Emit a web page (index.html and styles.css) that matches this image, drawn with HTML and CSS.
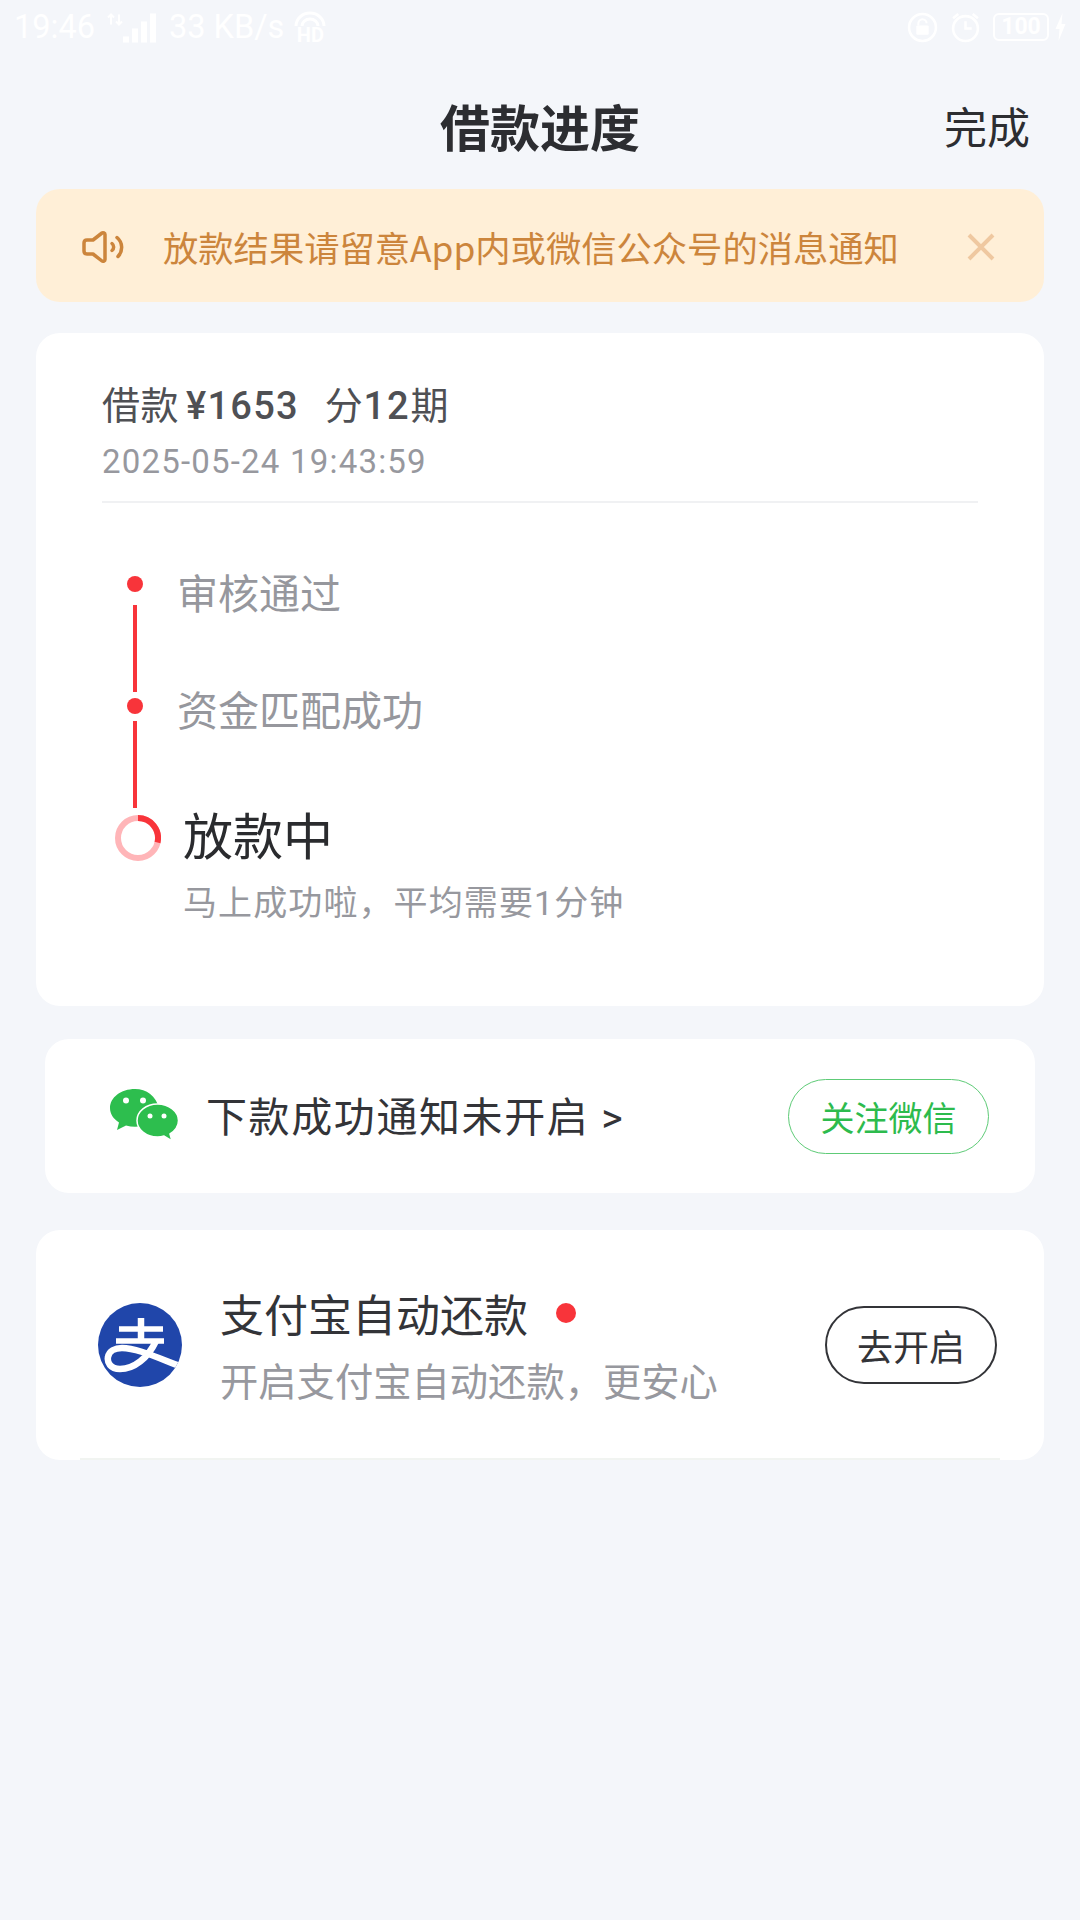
FILE: index.html
```html
<!DOCTYPE html>
<html lang="zh-CN">
<head>
    <meta charset="UTF-8">
    <meta name="viewport" content="width=device-width, initial-scale=1.0">
    <title>借款进度</title>
    <link rel="stylesheet" href="styles.css">
</head>
<body>
    <div class="status-bar">
        <div class="status-left">
            <span class="status-time">19:46</span>
            <svg class="signal" width="54" height="31" viewBox="0 0 54 30">
                <path d="M6 2v10M3 5l3-3 3 3M14 2v10M11 9l3 3 3-3" fill="none" stroke="#fff" stroke-width="2"/>
                <rect x="18" y="24" width="6" height="6" fill="#fff"/>
                <rect x="27" y="16" width="6" height="14" fill="#fff"/>
                <rect x="36" y="9" width="6" height="21" fill="#fff"/>
                <rect x="45" y="1" width="6" height="29" fill="#fff"/>
            </svg>
            <span class="status-speed">33 KB/s</span>
            <div class="hd">
                <svg width="32" height="16" viewBox="0 0 32 16">
                    <path d="M2 16a14 13 0 0 1 28 0" fill="none" stroke="#fff" stroke-width="3"/>
                    <path d="M8 16a8 7 0 0 1 16 0" fill="none" stroke="#fff" stroke-width="3"/>
                </svg>
                <span class="hd-text">HD</span>
            </div>
        </div>
        <div class="status-right">
            <svg width="31" height="31" viewBox="0 0 30 30">
                <circle cx="15" cy="15" r="13" fill="none" stroke="#fff" stroke-width="2.5"/>
                <rect x="9" y="13" width="12" height="9" rx="1" fill="#fff"/>
                <path d="M11 13v-2a4 4 0 0 1 8 0" fill="none" stroke="#fff" stroke-width="2"/>
            </svg>
            <svg width="31" height="31" viewBox="0 0 30 30">
                <circle cx="15" cy="16" r="12" fill="none" stroke="#fff" stroke-width="2.5"/>
                <path d="M15 9v7h6" fill="none" stroke="#fff" stroke-width="2.5"/>
                <path d="M3 6l5-4M27 6l-5-4" stroke="#fff" stroke-width="2.5"/>
            </svg>
            <span class="battery">100</span>
            <svg class="bolt" width="15" height="30" viewBox="0 0 14 30">
                <path d="M9 1L2 17h4l-1 12 7-17H8z" fill="#fff"/>
            </svg>
        </div>
    </div>

    <header class="nav">
        <h1 class="nav-title">借款进度</h1>
        <span class="nav-done">完成</span>
    </header>

    <div class="notice">
        <svg class="notice-icon" width="44" height="34" viewBox="0 0 44 34">
            <path d="M5 10h6l9-7c1-.8 3 0 3 1.500v25c0 1.500-2 2.300-3 1.500l-9-7H5c-2 0-3-1-3-3v-8c0-2 1-3 3-3z" fill="none" stroke="#cc853c" stroke-width="3.500" stroke-linejoin="round"/>
            <path d="M30 13.500a4.500 4.500 0 0 1 0 7" fill="none" stroke="#cc853c" stroke-width="3.500" stroke-linecap="round"/>
            <path d="M35 7.500a13 13 0 0 1 1 19" fill="none" stroke="#cc853c" stroke-width="3.500" stroke-linecap="round"/>
        </svg>
        <span class="notice-text">放款结果请留意App内或微信公众号的消息通知</span>
        <svg class="notice-close" width="28" height="28" viewBox="0 0 28 28">
            <path d="M2 2l24 24M26 2L2 26" stroke="#efc8a0" stroke-width="4"/>
        </svg>
    </div>

    <section class="card progress-card">
        <div class="loan-head">
            <div class="loan-title">借款 <b class="amount">¥1653</b>&nbsp;&nbsp;分<b>12</b>期</div>
            <div class="loan-date">2025-05-24 19:43:59</div>
        </div>
        <div class="steps">
            <div class="step">
                <div class="step-mark">
                    <span class="dot"></span>
                    <span class="line"></span>
                </div>
                <div class="step-label">审核通过</div>
            </div>
            <div class="step step-second">
                <div class="step-mark">
                    <span class="dot"></span>
                    <span class="line"></span>
                </div>
                <div class="step-label">资金匹配成功</div>
            </div>
            <div class="step step-current">
                <svg class="ring" width="46" height="46" viewBox="0 0 46 46">
                    <circle cx="23" cy="23" r="20" fill="none" stroke="#ffb5b8" stroke-width="6"/>
                    <path d="M23 3a20 20 0 0 1 19.500 24.500" fill="none" stroke="#f8343a" stroke-width="6"/>
                </svg>
                <div class="step-body">
                    <div class="step-now">放款中</div>
                    <div class="step-sub">马上成功啦，平均需要1分钟</div>
                </div>
            </div>
        </div>
    </section>

    <section class="card wechat-card">
        <svg class="wechat-icon" width="70" height="56" viewBox="0 0 70 56">
            <path d="M26 1C12 1 1 9.500 1 20c0 6 3.500 11 9 14.500L8 42l9-4.500c3 .8 6 1.200 9 1.200 3 0 6-.4 9-1.200L50 20C47 8 37.500 1 26 1z" fill="#2dbe4e"/>
            <circle cx="17" cy="12.500" r="3" fill="#fff"/>
            <circle cx="34" cy="12.500" r="3" fill="#fff"/>
            <path d="M48.500 16C37 16 28 23.500 28 32.500S37 49 48.500 49c2 0 4.500-.3 6.500-1l8 5-2-7c5-3.200 8.500-8 8.500-13.500C69.500 23.500 60 16 48.500 16z" fill="#2dbe4e" stroke="#fff" stroke-width="1.500"/>
            <circle cx="41" cy="28" r="2.500" fill="#fff"/>
            <circle cx="55" cy="28" r="2.500" fill="#fff"/>
        </svg>
        <span class="wechat-text">下款成功通知未开启 &gt;</span>
        <span class="btn btn-green">关注微信</span>
    </section>

    <section class="card alipay-card">
        <svg class="alipay-icon" width="84" height="84" viewBox="0 0 84 84">
            <defs>
                <clipPath id="alipayClip"><circle cx="42" cy="42" r="42"/></clipPath>
            </defs>
            <circle cx="42" cy="42" r="42" fill="#2046aa"/>
            <g clip-path="url(#alipayClip)" fill="none" stroke="#fff">
                <path d="M21 26h44M18 38h48" stroke-width="5.500"/>
                <path d="M43 15v23" stroke-width="6.500"/>
                <path d="M58 38C50 55 36 66 22 66C12 66 9 59 10 54C11 48 17 45 24 45C40 45 62 56 90 66" stroke-width="6.500"/>
            </g>
        </svg>
        <div class="alipay-body">
            <div class="alipay-title">支付宝自动还款<span class="red-dot"></span></div>
            <div class="alipay-sub">开启支付宝自动还款，更安心</div>
        </div>
        <span class="btn btn-dark">去开启</span>
        <div class="card-edge"></div>
    </section>
</body>
</html>
```

FILE: styles.css
```css
* {
    box-sizing: border-box;
}
body {
    margin: 0;
    height: 1920px;
    overflow: hidden;
    background-color: #f4f6fa;
    font-family: Roboto, "Noto Sans CJK SC", sans-serif;
    color: #2c2d31;
}
.status-bar {
    display: flex;
    justify-content: space-between;
    align-items: center;
    height: 54px;
    padding: 0 12px 0 14px;
    color: #fff;
    font-size: 32.500px;
}
.status-left, .status-right {
    display: flex;
    align-items: center;
    gap: 10px;
}
.status-right {
    gap: 12px;
}
.hd {
    display: flex;
    flex-direction: column;
    align-items: center;
    width: 32px;
}
.hd-text {
    font-size: 20px;
    font-weight: 700;
    line-height: 18px;
}
.battery {
    width: 56px;
    height: 28px;
    border: 2px solid #fff;
    border-radius: 6px;
    font-size: 23px;
    font-weight: 700;
    line-height: 24px;
    text-align: center;
}
.bolt {
    margin-left: -8px;
}
.nav {
    position: relative;
    height: 135px;
    display: flex;
    align-items: center;
    justify-content: center;
    padding-top: 6px;
}
.nav-title {
    margin: 0;
    font-size: 50px;
    font-weight: 700;
    font-family: "Noto Sans CJK SC", sans-serif;
}
.nav-done {
    position: absolute;
    right: 50px;
    font-size: 43px;
    font-family: "Noto Sans CJK SC", sans-serif;
}
.notice {
    display: flex;
    align-items: center;
    height: 113px;
    margin: 0 36px;
    padding: 2px 49px 0 46px;
    border-radius: 24px;
    background-color: #ffefd7;
    color: #cc853c;
    font-size: 35.300px;
    font-family: "Noto Sans CJK SC", sans-serif;
}
.notice-text {
    flex: 1;
    margin-left: 37px;
    white-space: nowrap;
}
.card {
    background: #fff;
    border-radius: 24px;
    margin: 0 36px;
}
.progress-card {
    height: 673px;
    margin-top: 31px;
    padding: 0 66px;
}
.loan-head {
    height: 170px;
    padding-top: 51px;
    border-bottom: 2px solid #f0f1f3;
}
.loan-title {
    font-size: 38px;
    line-height: 44px;
    color: #4f5054;
    white-space: nowrap;
    letter-spacing: 0.500px;
}
.loan-title b {
    font-weight: 500;
    letter-spacing: 2px;
}
.loan-title .amount {
    margin: 0 6px 0 -3px;
    letter-spacing: 1.300px;
}
.loan-date {
    margin-top: 14px;
    font-size: 33px;
    line-height: 40px;
    letter-spacing: 1.200px;
    color: #97989e;
}
.steps {
    padding: 73px 0 0 19px;
}
.step {
    display: flex;
    height: 122px;
    padding-left: 6px;
}
.step-second {
    height: 116px;
}
.step-mark {
    display: flex;
    flex-direction: column;
    align-items: center;
    width: 16px;
}
.dot {
    width: 16px;
    height: 16px;
    flex: none;
    border-radius: 50%;
    background-color: #f8343a;
}
.line {
    width: 4px;
    height: 87px;
    margin-top: 13px;
    background-color: #f8343a;
}
.step-second .line {
    margin-top: 7px;
}
.step-label {
    margin: -10px 0 0 34px;
    font-size: 41px;
    line-height: 50px;
    color: #96979d;
    font-family: "Noto Sans CJK SC", sans-serif;
}
.step-second .step-label {
    margin-top: -15px;
}
.step-current {
    height: auto;
    padding-left: 0;
}
.ring {
    flex: none;
    margin-top: 1px;
    margin-left: -6px;
}
.step-body {
    margin-left: 22px;
}
.step-now {
    margin-top: -16px;
    font-size: 50px;
    line-height: 70px;
    color: #2a2b2e;
    font-family: "Noto Sans CJK SC", sans-serif;
}
.step-sub {
    margin-top: 13px;
    font-size: 34px;
    line-height: 44px;
    letter-spacing: 1.100px;
    color: #97989e;
}
.wechat-card {
    display: flex;
    align-items: center;
    height: 154px;
    margin: 33px 45px 0;
    padding: 0 46px 0 64px;
}
.wechat-text {
    flex: 1;
    margin: -4px 0 0 27px;
    font-size: 41px;
    letter-spacing: 1.600px;
    color: #333438;
    white-space: nowrap;
}
.btn {
    display: flex;
    align-items: center;
    justify-content: center;
    border-radius: 40px;
    background: #fff;
    white-space: nowrap;
}
.btn-green {
    width: 201px;
    height: 75px;
    border: 1.500px solid #5ecb77;
    color: #2dbb4d;
    font-size: 34px;
}
.btn-dark {
    width: 172px;
    height: 78px;
    border: 2px solid #333438;
    color: #333438;
    font-size: 36px;
}
.alipay-card {
    position: relative;
    display: flex;
    align-items: center;
    height: 230px;
    margin-top: 37px;
    padding: 0 47px 0 62px;
}
.alipay-icon {
    flex: none;
}
.alipay-body {
    flex: 1;
    margin-left: 38px;
    padding-top: 6px;
}
.alipay-title {
    display: flex;
    align-items: center;
    font-size: 44px;
    line-height: 60px;
    color: #333438;
}
.red-dot {
    width: 20px;
    height: 20px;
    margin: -9px 0 0 28px;
    border-radius: 50%;
    background-color: #f8343a;
}
.alipay-sub {
    margin-top: 10px;
    font-size: 38.300px;
    line-height: 52px;
    color: #97989e;
}
.card-edge {
    position: absolute;
    left: 44px;
    right: 44px;
    bottom: 0;
    height: 2px;
    background-color: #f1f4f1;
}
```
